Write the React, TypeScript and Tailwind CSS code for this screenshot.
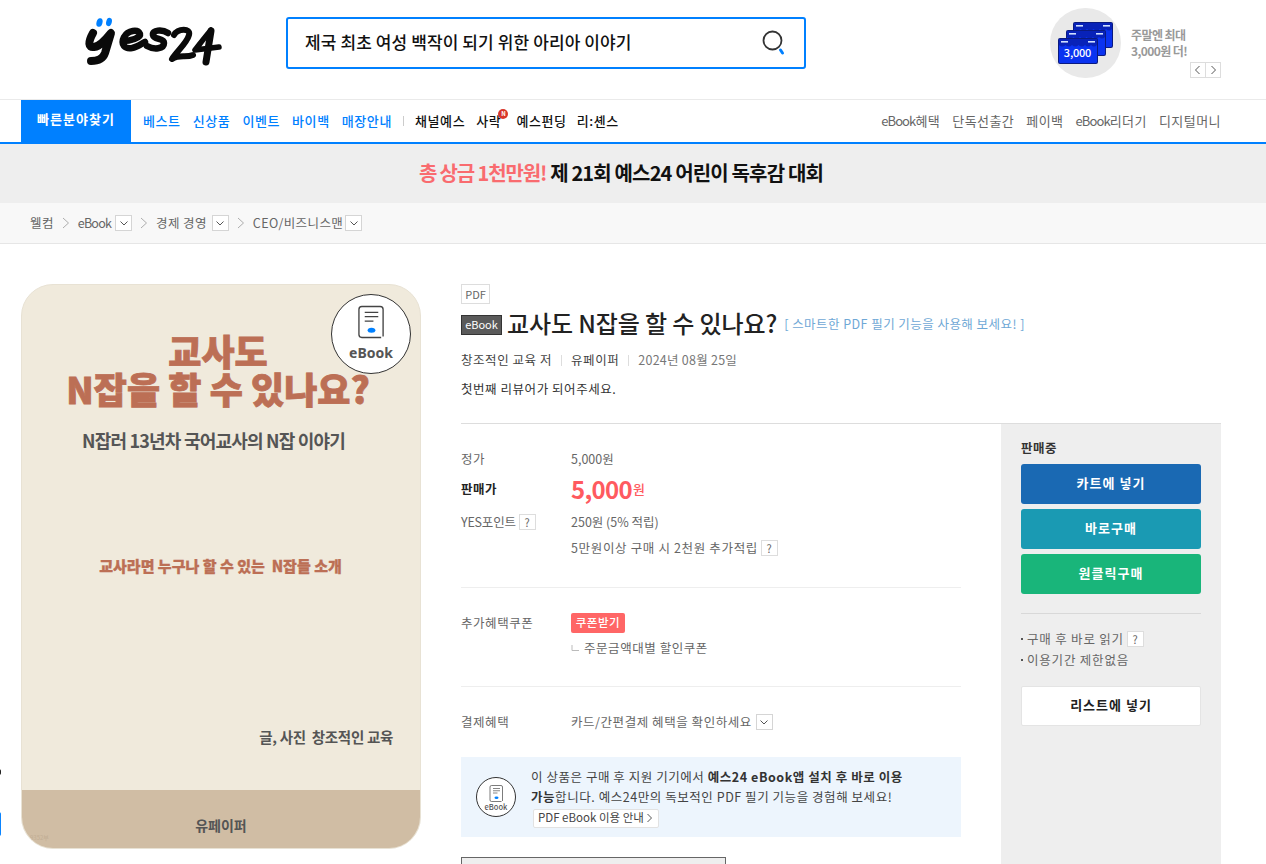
import React from "react";

const Chev = ({ d = "down", c = "#555" }: { d?: "down" | "left" | "right"; c?: string }) => {
  const p = d === "down" ? "M1.5 3.5 L5 7 L8.5 3.5" : d === "left" ? "M6.5 1 L2.5 5 L6.5 9" : "M3.5 1 L7.5 5 L3.5 9";
  return (
    <svg width="10" height="10" viewBox="0 0 10 10" fill="none">
      <path d={p} stroke={c} strokeWidth="1" />
    </svg>
  );
};
const DropBox = () => (
  <span className="inline-flex w-[17px] h-[16px] items-center justify-center border border-[#d5d5d5] bg-white">
    <Chev />
  </span>
);
const Q = ({ cls = "" }: { cls?: string }) => (
  <span className={"inline-flex w-[17px] h-[16px] items-center justify-center border border-[#ddd] bg-white text-[11px] text-[#666] leading-none " + cls}>?</span>
);
const Sep = () => (
  <svg width="8" height="12" viewBox="0 0 8 12" fill="none" className="mx-[8px]">
    <path d="M1 1 L6.5 6 L1 11" stroke="#999" strokeWidth="0.8" />
  </svg>
);

const Logo = () => (
  <svg width="180" height="70" viewBox="0 0 180 70" fill="none" className="block">
    <ellipse cx="39.5" cy="17.5" rx="3" ry="4.4" fill="#0080ff" transform="rotate(15 39.5 17.5)" />
    <ellipse cx="49" cy="17" rx="2.8" ry="4.2" fill="#0080ff" transform="rotate(15 49 17)" />
    <g stroke="#0a0a0a" strokeLinecap="round" strokeLinejoin="round">
      <path d="M33 28 C28 37 28 43 34 42 C41 41 47 33 51 28 L45 48 C43 54 37 56 31 56" strokeWidth="8" />
      <path d="M63 36 C70 36 81 33 80 29 C78 24 68 25 64 32 C60 40 65 44 72 43 C77 42 81 39 85 37" strokeWidth="6.5" />
      <path d="M108 28 C102 24 92 25 93 30 C94 35 104 33 104 38 C104 44 94 45 87 41" strokeWidth="6.5" />
    </g>
    <g stroke="#0a0a0a" strokeWidth="6" strokeLinecap="round" strokeLinejoin="round">
      <path d="M114 30 C118 23 131 23 129 30 C127 38 117 46 112 54 C119 49 126 53 133 50" />
      <path d="M151 25 C145 32 139 40 135 45 L159 42" strokeWidth="5.5" />
      <path d="M151 26 L146 57" strokeWidth="7" />
    </g>
  </svg>
);

const Ticket = ({ x, y }: { x: number; y: number }) => (
  <g transform={`translate(${x} ${y})`}>
    <rect x="0" y="0" width="40" height="26" rx="2" fill="#0a1a80" />
    <rect x="1" y="1" width="38" height="24" rx="1.5" fill="#0a33f0" />
    <path d="M1 7 Q4 10 7.5 7 Q11 10 14 7 Q17.5 10 20.5 7 Q24 10 27 7 Q30 10 33 7 Q36 10 39 7 V1 H1 Z" fill="#0822b8" />
    <rect x="3" y="3" width="7" height="1.6" fill="#cfe0ff" />
    <rect x="30" y="3" width="7" height="1.6" fill="#cfe0ff" />
  </g>
);
const Tickets = () => (
  <svg width="56" height="42" viewBox="0 0 56 42" className="block">
    <Ticket x={15} y={0} />
    <Ticket x={8} y={8} />
    <Ticket x={0} y={16} />
  </svg>
);

const DeviceIcon = ({ w = 34, h = 42 }: { w?: number; h?: number }) => (
  <svg width={w} height={h} viewBox="0 0 30 36" fill="none" className="block">
    <path d="M27 33 L27 5 Q27 2 24 2 L5 2 Q2 2 2 5 L2 31 Q2 34 5 34 L25 34" stroke="#444" strokeWidth="1.4" />
    <path d="M8 8 H22 M8 12.5 H22 M8 17 H17" stroke="#444" strokeWidth="1.3" />
    <ellipse cx="15" cy="26.5" rx="4" ry="2.6" fill="#0080ff" />
  </svg>
);

const Row = ({ label, bold, children, cls = "" }: { label: React.ReactNode; bold?: boolean; children: React.ReactNode; cls?: string }) => (
  <div className={"flex items-center " + cls}>
    <div className={"w-[110px] flex items-center gap-[3px] " + (bold ? "font-bold text-[#222]" : "text-[#666]")}>{label}</div>
    <div className="flex items-center text-[#666]">{children}</div>
  </div>
);

export default function App() {
  const f = "font-['Noto_Sans_CJK_KR','Noto_Sans',sans-serif]";
  return (
    <div className={"w-[1266px] h-[864px] overflow-hidden relative bg-white text-[12.5px] tracking-[0.55px] " + f}>
      {/* stray edge marks */}
      <div className="absolute left-[-3px] top-[769px] w-[4px] h-[6px] rounded-full bg-[#222]" />
      <div className="absolute left-[-3px] top-[812px] w-[4px] h-[24px] rounded-full bg-[#0a84ff]" />

      {/* header */}
      <header className="h-[100px] border-b border-[#eaeaea] flex items-start pr-[45px] tracking-normal">
        <div className="ml-[60px] mt-[5px] w-[180px] shrink-0"><Logo /></div>
        <div className="ml-[46px] mt-[17px] w-[520px] h-[52px] border-[2px] border-[#0080ff] rounded-[3px] flex items-center justify-between pl-[17px] pr-[17px]">
          <span className="text-[17px] font-medium text-[#111] tracking-[0.1px] pb-[2px]">제국 최초 여성 백작이 되기 위한 아리아 이야기</span>
          <svg width="26" height="28" viewBox="0 0 26 28" fill="none">
            <circle cx="11.5" cy="11.5" r="9" stroke="#333" strokeWidth="1.8" />
            <path d="M19.5 21 L21.5 24" stroke="#0080ff" strokeWidth="3" strokeLinecap="round" />
          </svg>
        </div>
        <div className="ml-auto mt-[8px] flex items-start">
          <div className="w-[71px] h-[70px] rounded-full bg-[#e9e9e9] flex items-center justify-center">
            <div className="relative">
              <Tickets />
              <span className="absolute left-0 top-[20px] w-[40px] text-center text-[11px] font-medium text-white leading-[20px] tracking-[-0.2px]">3,000</span>
            </div>
          </div>
          <div className="ml-[10px] w-[90px] mt-[19px] text-[#999] text-[12px] font-bold leading-[16px] tracking-[-0.6px]">
            <p>주말엔 최대</p>
            <p>3,000원 더!</p>
            <div className="flex justify-end mt-[3px]">
              <span className="w-[16px] h-[16px] border border-[#ddd] flex items-center justify-center"><Chev d="left" /></span>
              <span className="w-[15px] h-[16px] border border-l-0 border-[#ddd] flex items-center justify-center"><Chev d="right" /></span>
            </div>
          </div>
        </div>
      </header>

      {/* nav */}
      <nav className="h-[44px] border-b-[2px] border-[#0080ff] flex items-stretch pl-[21px] pr-[45px]">
        <div className="w-[110px] bg-[#0080ff] text-white font-bold text-[13px] tracking-[1px] flex items-center justify-center pb-[4px]">빠른분야찾기</div>
        <div className="flex items-center gap-[12px] ml-[12px] text-[#0080ff] text-[13px] font-medium tracking-[0.6px]">
          <span>베스트</span><span>신상품</span><span>이벤트</span><span>바이백</span><span>매장안내</span>
        </div>
        <div className="flex items-center"><span className="mx-[11px] w-px h-[10px] bg-[#ccc]" /></div>
        <div className="flex items-center text-[#111] text-[13px] font-medium tracking-[0.6px]">
          <span>채널예스</span>
          <span className="relative ml-[11px] mr-[15px]">사락
            <span className="absolute right-[-7px] top-[-2px] w-[10px] h-[10px] rounded-full bg-[#d8362a] text-white text-[6px] font-bold leading-[10px] text-center tracking-normal">N</span>
          </span>
          <span>예스펀딩</span>
          <span className="ml-[10px]">리:셴스</span>
        </div>
        <div className="ml-auto flex items-center gap-[12px] text-[#666] text-[13px] tracking-[0.45px]">
          <span><span className="tracking-[-0.9px]">eBook</span>혜택</span><span>단독선출간</span><span>페이백</span><span><span className="tracking-[-0.9px]">eBook</span>리더기</span><span>디지털머니</span>
        </div>
      </nav>

      {/* banner */}
      <div className="h-[59px] bg-[#eee] flex items-center justify-center text-[20px] font-bold tracking-[-1.15px] pb-[2px] pr-[24px]">
        <span className="text-[#f96b6f]">총 상금 1천만원!</span>
        <span className="text-[#111] ml-[4px] tracking-[-0.85px]">제 21회 예스24 어린이 독후감 대회</span>
      </div>

      {/* breadcrumb */}
      <div className="h-[41px] bg-[#f8f8f8] border-b border-[#e6e6e6] flex items-center pl-[30px] text-[#666] text-[12.5px] tracking-[0.4px]">
        <span>웰컴</span><Sep /><span className="tracking-[-0.8px]">eBook</span><span className="ml-[4px]"><DropBox /></span><Sep /><span>경제 경영</span><span className="ml-[5px]"><DropBox /></span><Sep /><span>CEO/비즈니스맨</span><span className="ml-[2px]"><DropBox /></span>
      </div>

      {/* main */}
      <main className="flex pl-[21px] pt-[40px]">
        {/* cover */}
        <div className="relative w-[400px] h-[565px] shrink-0 rounded-[32px] overflow-hidden bg-[#f0eadc] flex flex-col items-center border border-[#e8e2d4] tracking-normal">
          <div className="text-[#bc6f55] font-black text-center leading-[38px] text-[36px] mt-[46px] ml-[-6px] [-webkit-text-stroke:0.8px_#bc6f55]">
            <p>교사도</p>
            <p className="whitespace-nowrap">N잡을 할 수 있나요?</p>
          </div>
          <p className="text-[#555] font-bold text-[18px] mt-[20px] ml-[-15px] tracking-[-0.8px]">N잡러 13년차 국어교사의 N잡 이야기</p>
          <p className="text-[#bc6f55] font-black text-[15px] mt-[101px] ml-[-1px] [-webkit-text-stroke:0.3px_#bc6f55]">교사라면 누구나 할 수 있는&nbsp; N잡들 소개</p>
          <p className="text-[#555] font-bold text-[14.5px] mt-[148px] self-end mr-[27px] tracking-[-0.3px]">글, 사진&nbsp; 창조적인 교육</p>
          <div className="relative mt-auto w-full h-[58px] bg-[#d0bda4] text-[#555] font-bold text-[14px] flex items-center justify-center pt-[12px]">
            유페이퍼
            <span className="absolute left-[8px] bottom-[7px] text-[6px] font-normal leading-none text-[#c2ae95]">9352부</span>
          </div>
        </div>

        {/* right */}
        <div className="ml-[40px] w-[760px] shrink-0">
          <span className="flex w-[29px] h-[20px] items-center justify-center border border-[#ddd] text-[11px] text-[#666] tracking-normal">PDF</span>
          <div className="flex items-center mt-[4px] h-[30px]">
            <span className="w-[41px] h-[20px] mt-[3px] flex items-center justify-center bg-[#5a5a5a] border border-[#333] text-white text-[11px] mr-[5px] tracking-normal">eBook</span>
            <h1 className="text-[24px] font-medium text-[#222] tracking-[-0.1px] whitespace-nowrap">교사도 N잡을 할 수 있나요?</h1>
            <span className="ml-[7px] text-[#6fa8d6] text-[12.5px] mt-[3px] tracking-[0.45px]">[ 스마트한 PDF 필기 기능을 사용해 보세요! ]</span>
          </div>
          <div className="flex items-center mt-[13px] h-[18px] text-[#444]">
            <span>창조적인 교육 저</span>
            <span className="mx-[9px] w-px h-[11px] bg-[#ddd]" />
            <span>유페이퍼</span>
            <span className="mx-[9px] w-px h-[11px] bg-[#ddd]" />
            <span className="text-[#777] tracking-[0.25px]">2024년 08월 25일</span>
          </div>
          <p className="mt-[11px] h-[18px] text-[#333] leading-[18px]">첫번째 리뷰어가 되어주세요.</p>

          <div className="mt-[25px] border-t border-[#ddd] flex">
            {/* details */}
            <div className="w-[540px] shrink-0 pr-[40px]">
              <div className="pt-[25px] border-b border-[#eee] h-[164px]">
                <Row label="정가" cls="h-[20px]"><span className="tracking-normal">5,000원</span></Row>
                <Row label="판매가" bold cls="h-[26px] mt-[7px]">
                  <span className="text-[#ff5a5f] font-bold text-[24px] leading-none tracking-[-0.7px]">5,000</span>
                  <span className="text-[#ff5a5f] text-[13px] font-medium ml-[1px]">원</span>
                </Row>
                <Row label={<><span className="tracking-[-0.2px]">YES포인트</span><Q /></>} cls="h-[20px] mt-[10px]"><span className="tracking-normal">250원 (5% 적립)</span></Row>
                <Row label="" cls="h-[20px] mt-[6px]"><span className="tracking-[0.65px]">5만원이상 구매 시 2천원 추가적립</span><Q cls="ml-[3px]" /></Row>
              </div>
              <div className="pt-[25px] border-b border-[#eee] h-[99px]">
                <Row label="추가혜택쿠폰" cls="h-[20px]">
                  <span className="w-[54px] h-[20px] rounded-[2px] bg-[#ff6666] text-white text-[11.5px] font-medium flex items-center justify-center">쿠폰받기</span>
                </Row>
                <Row label="" cls="h-[20px] mt-[5px]">
                  <svg width="12" height="8" viewBox="0 0 12 8" fill="none" className="mr-[1px]"><path d="M1 1 V6.5 H8" stroke="#bbb" /></svg>
                  <span>주문금액대별 할인쿠폰</span>
                </Row>
              </div>
              <div className="pt-[25px]">
                <Row label="결제혜택" cls="h-[20px]"><span>카드/간편결제 혜택을 확인하세요</span><span className="ml-[4px]"><DropBox /></span></Row>
              </div>
              <div className="mt-[25px] h-[80px] bg-[#edf5fd] flex items-center pl-[15px]">
                <div className="w-[40px] h-[40px] rounded-full border border-[#333] bg-white flex flex-col items-center justify-center shrink-0 tracking-normal">
                  <DeviceIcon w={15} h={19} />
                  <span className="text-[7.5px] leading-[8px] font-medium text-[#555]">eBook</span>
                </div>
                <div className="ml-[15px] text-[#444] leading-[20px] pt-[1px]">
                  <p className="whitespace-nowrap">이 상품은 구매 후 지원 기기에서 <b className="font-bold text-[#333]">예스24 eBook앱 설치 후 바로 이용</b></p>
                  <p className="whitespace-nowrap"><b className="font-bold text-[#333]">가능</b>합니다. 예스24만의 독보적인 PDF 필기 기능을 경험해 보세요!</p>
                  <span className="inline-flex items-center h-[19px] ml-[2px] px-[4px] bg-white border border-[#e2e2e2] rounded-[2px] text-[11.5px] text-[#444] leading-none tracking-normal">PDF eBook 이용 안내<Chev d="right" /></span>
                </div>
              </div>
              <div className="mt-[20px] w-[265px] h-[40px] bg-[#eee] border border-[#666]" />
            </div>

            {/* sidebar */}
            <aside className="w-[220px] h-[440px] bg-[#eee] px-[20px] pt-[15px]">
              <p className="text-[#333] font-bold leading-[18px] mb-[7px]">판매중</p>
              <div className="flex flex-col gap-[5px] tracking-[1px]">
                <button className="h-[40px] rounded-[3px] bg-[#1a69b3] text-white font-bold text-[13px] pb-[2px]">카트에 넣기</button>
                <button className="h-[40px] rounded-[3px] bg-[#1a9ab3] text-white font-bold text-[13px] pb-[2px]">바로구매</button>
                <button className="h-[40px] rounded-[3px] bg-[#19b57a] text-white font-bold text-[13px] pb-[2px]">원클릭구매</button>
              </div>
              <div className="mt-[19px] border-t border-[#d8d8d8] pt-[15px] text-[#666] leading-[20px] tracking-[0.8px]">
                <p className="flex items-center h-[20px]"><span className="w-[2px] h-[2px] bg-[#555] mr-[4px]" />구매 후 바로 읽기<Q cls="ml-[3px]" /></p>
                <p className="flex items-center h-[20px] mt-[1px]"><span className="w-[2px] h-[2px] bg-[#555] mr-[4px]" />이용기간 제한없음</p>
              </div>
              <button className="mt-[16px] w-[180px] h-[40px] rounded-[2px] bg-white border border-[#e4e4e4] text-[#222] font-bold text-[13px] tracking-[1px] pb-[2px]">리스트에 넣기</button>
            </aside>
          </div>
        </div>
      </main>

      {/* eBook badge */}
      <div className="absolute left-[331px] top-[294px] w-[80px] h-[80px] rounded-full bg-white border border-[#333] flex flex-col items-center pt-[8px] tracking-normal">
        <DeviceIcon w={29} h={38} />
        <span className="text-[14px] font-bold text-[#555] leading-[16px] mt-[4px] font-['Noto_Sans',sans-serif]">eBook</span>
      </div>
    </div>
  );
}
